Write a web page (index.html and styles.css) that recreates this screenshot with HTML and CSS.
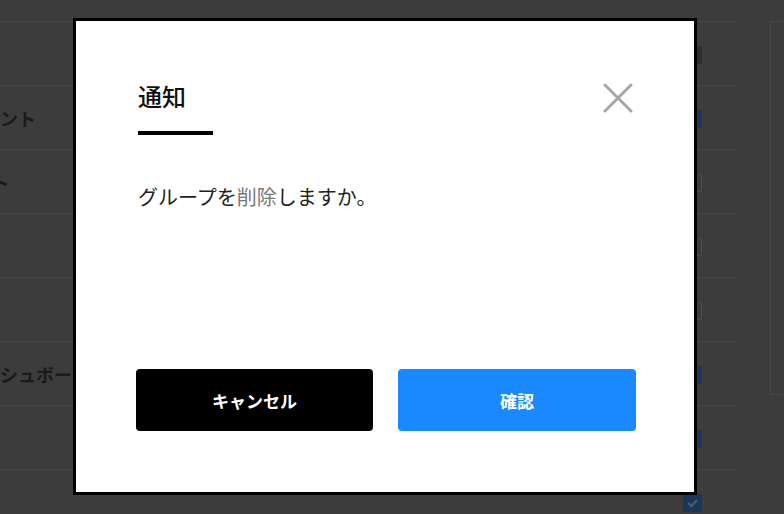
FILE: index.html
```html
<!DOCTYPE html>
<html lang="ja">
<head>
<meta charset="utf-8">
<title>通知</title>
<link rel="stylesheet" href="styles.css">
</head>
<body>
<div class="page">
  <div class="list">
    <div class="row"><span class="label"></span><span class="box box-dark"></span></div>
    <div class="row"><span class="label">ポイント</span><span class="box box-on"></span></div>
    <div class="row"><span class="label label-shift">テキスト</span><span class="box box-off"></span></div>
    <div class="row"><span class="label"></span><span class="box box-off"></span></div>
    <div class="row"><span class="label"></span><span class="box box-off"></span></div>
    <div class="row"><span class="label">ダッシュボード</span><span class="box box-on"></span></div>
    <div class="row"><span class="label"></span><span class="box box-on"></span></div>
    <div class="row"><span class="label"></span><span class="box box-on"><svg class="tick" viewBox="0 0 19 18" width="19" height="18"><path d="M5 9 L8.5 12 L14 6" fill="none" stroke="#4e5d70" stroke-width="2"/></svg></span></div>
  </div>
  <div class="panel"></div>
</div>

<div class="dialog" role="dialog">
  <div class="head">
    <div class="title-wrap">
      <h2 class="title">通知</h2>
      <div class="title-bar"></div>
    </div>
    <button class="close" aria-label="閉じる">
      <svg viewBox="0 0 30 30" width="30" height="30"><path d="M2 2 L28 28 M28 2 L2 28" stroke="#a6a6a6" stroke-width="3" fill="none" stroke-linecap="round"/></svg>
    </button>
  </div>
  <p class="message">グループを<span class="soft">削除</span>しますか。</p>
  <div class="actions">
    <button class="btn btn-cancel">キャンセル</button>
    <button class="btn btn-ok">確認</button>
  </div>
</div>
</body>
</html>
```
FILE: styles.css
```css
* { box-sizing: border-box; }
html, body {
  margin: 0;
  height: 514px;
  overflow: hidden;
  background: #3c3c3c;
  font-family: "Noto Sans CJK JP", "Noto Sans", sans-serif;
}
.page {
  display: flex;
  gap: 32px;
  padding-top: 21px;
  margin-left: -36px;
}
.list {
  width: 774px;
  flex: none;
}
.row {
  height: 64px;
  border-top: 1px solid #464646;
  display: flex;
  align-items: center;
  padding-right: 36px;
}
.label {
  flex: 1;
  font-size: 18px;
  font-weight: 700;
  color: #1a1a1a;
  white-space: nowrap;
  line-height: 24px;
}
.label-shift { margin-left: -26px; }
.box {
  width: 19px;
  height: 18px;
  border-radius: 2px;
  flex: none;
  margin-top: 2px;
  display: flex;
}
.box-dark { background: #2e2e2e; }
.box-on { background: #1a365a; }
.box-off { border: 1px solid #4d4d4d; }
.panel {
  flex: none;
  width: 60px;
  height: 374px;
  border: 1px solid #474747;
}

.dialog {
  position: absolute;
  left: 73px;
  top: 18px;
  width: 624px;
  height: 477px;
  background: #fff;
  border: 3px solid #000;
  display: flex;
  flex-direction: column;
  padding: 59px 61px 61px 62px;
}
.head {
  display: flex;
  justify-content: space-between;
  align-items: flex-start;
}
.title {
  margin: 0;
  font-size: 24px;
  line-height: 32px;
  font-weight: 500;
  color: #111;
}
.title-bar {
  margin-top: 19px;
  width: 75px;
  height: 4px;
  background: #000;
}
.close {
  margin-top: 3px;
  padding: 0;
  border: 0;
  background: none;
  width: 30px;
  height: 30px;
  display: flex;
}
.message {
  margin: 48px 0 0;
  font-size: 20px;
  line-height: 28px;
  color: #222;
  flex: 1;
}
.soft { color: #777; }
.actions {
  display: grid;
  grid-template-columns: 237px 238px;
  gap: 25px;
  margin-left: -2px;
}
.btn {
  height: 62px;
  border: 0;
  border-radius: 4px;
  font-family: inherit;
  font-size: 17px;
  font-weight: 700;
  color: #fff;
}
.btn-cancel { background: #000; }
.btn-ok { background: #1a88ff; }
```
